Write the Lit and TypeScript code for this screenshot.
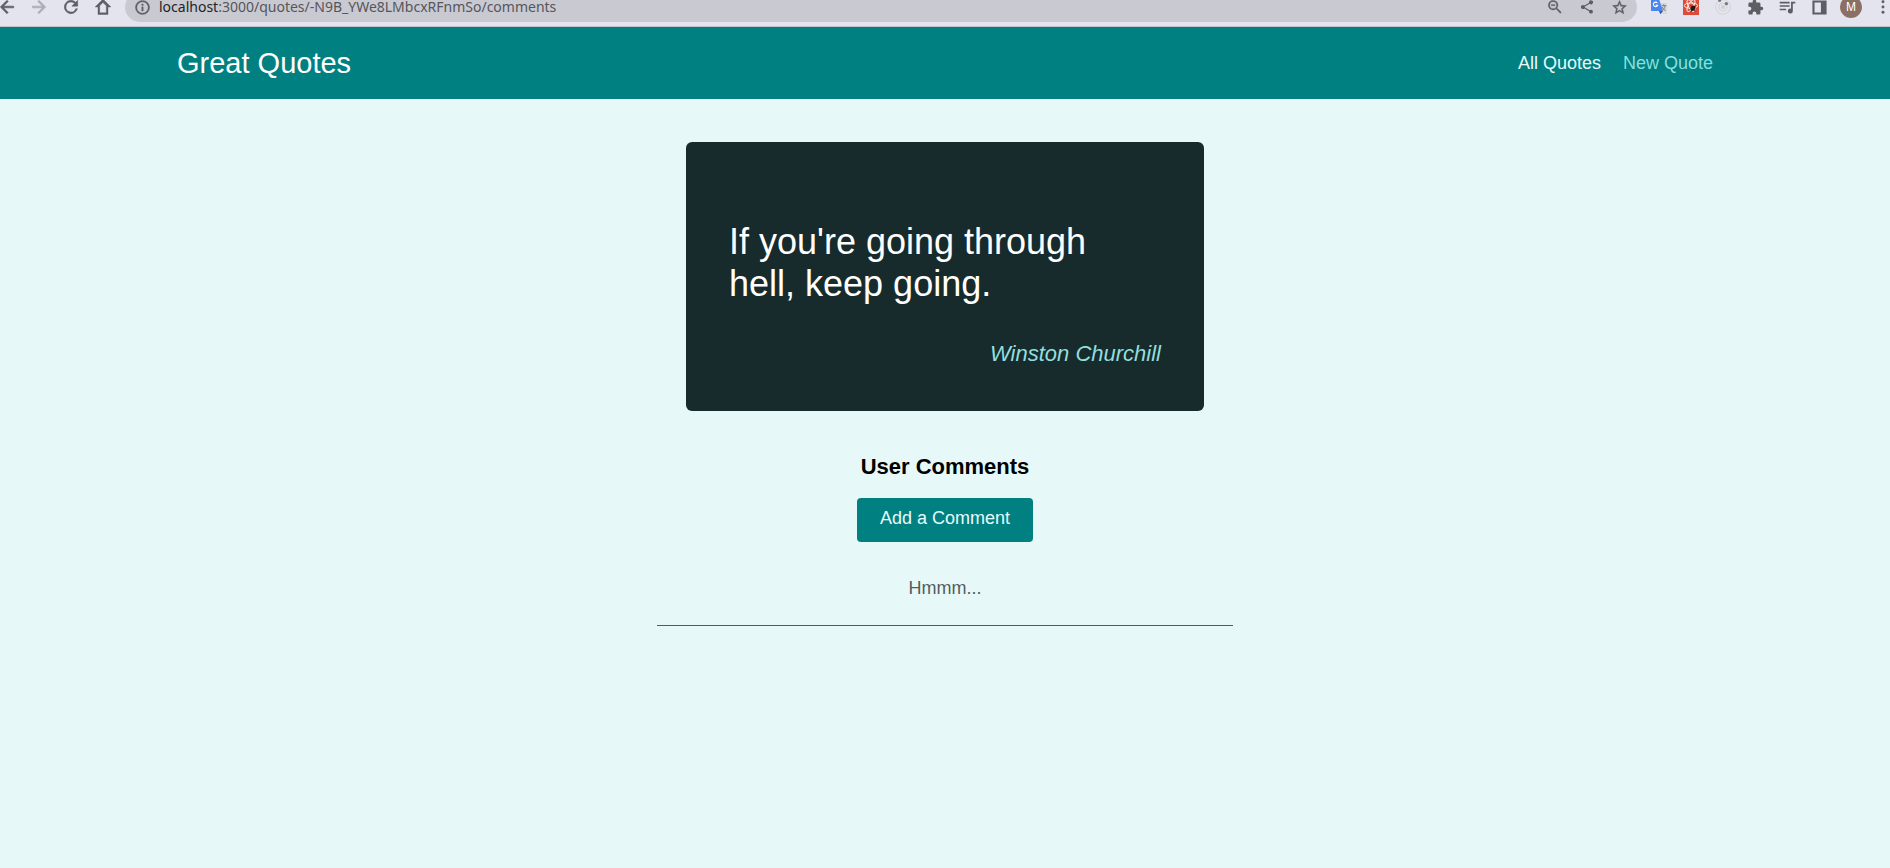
import { LitElement, html, css, svg } from "lit";
import { customElement } from "lit/decorators.js";

const icon = (body: unknown, size = 18) => html`<svg viewBox="0 0 24 24" width=${size} height=${size} fill="currentColor" aria-hidden="true">${body}</svg>`;

const ICONS = {
  back: svg`<path d="M20 11H7.8l5.6-5.6L12 4l-8 8 8 8 1.4-1.4L7.8 13H20z" stroke="currentColor" stroke-width=".8"/>`,
  forward: svg`<path d="M4 11h12.2l-5.6-5.6L12 4l8 8-8 8-1.4-1.4 5.6-5.6H4z" stroke="currentColor" stroke-width=".8"/>`,
  reload: svg`<path d="M17.65 6.35A8 8 0 1 0 19.73 14h-2.08A6 6 0 1 1 12 6c1.66 0 3.14.69 4.22 1.78L13 11h7V4z" stroke="currentColor" stroke-width=".6"/>`,
  home: svg`<path d="M12 2.500 2.500 12H6v9h12v-9h3.500z M8 19v-8.400l4-4 4 4V19z" fill-rule="evenodd" stroke="currentColor" stroke-width=".5"/>`,
  info: svg`<path d="M11 7h2v2h-2zm0 4h2v6h-2zm1-9a10 10 0 1 0 0 20 10 10 0 0 0 0-20zm0 18a8 8 0 1 1 0-16 8 8 0 0 1 0 16z" stroke="currentColor" stroke-width=".5"/>`,
  zoomOut: svg`<path d="M15.500 14h-.8l-.27-.27a6.500 6.500 0 1 0-.7.700l.27.28v.79l5 5L20.500 19zm-6 0a4.500 4.500 0 1 1 0-9 4.500 4.500 0 0 1 0 9zM7 8.800h5v1.400H7z" stroke="currentColor" stroke-width=".3"/>`,
  share: svg`<path d="M18 16.080c-.76 0-1.440.3-1.960.77L8.910 12.700c.05-.23.09-.46.09-.7s-.04-.47-.09-.7l7.050-4.110A3 3 0 1 0 15 5c0 .24.04.47.09.7L8.040 9.810a3 3 0 1 0 0 4.380l7.120 4.160c-.05.21-.08.43-.08.65a2.920 2.920 0 1 0 2.920-2.920z"/>`,
  star: svg`<path d="m22 9.240-7.190-.62L12 2 9.190 8.630 2 9.240l5.460 4.730L5.820 21 12 17.270 18.180 21l-1.630-7.030zM12 15.400l-3.760 2.270 1-4.280-3.320-2.880 4.380-.38L12 6.100l1.710 4.040 4.380.38-3.320 2.880 1 4.280z" stroke="currentColor" stroke-width=".5"/>`,
  puzzle: svg`<path d="M20.500 11H19V7a2 2 0 0 0-2-2h-4V3.500a2.500 2.500 0 0 0-5 0V5H4a2 2 0 0 0-2 2v3.800h1.500a2.700 2.700 0 0 1 0 5.400H2V20c0 1.100.9 2 2 2h3.800v-1.500a2.700 2.700 0 0 1 5.400 0V22H17a2 2 0 0 0 2-2v-4h1.500a2.500 2.500 0 0 0 0-5z"/>`,
  queue: svg`<path d="M1 4h14v2.200H1zm0 4.900h14v2.200H1zm0 4.900h9v2.200H1zM17 4h6v2.500h-3.500V17a3.500 3.500 0 1 1-2.500-3.300z"/>`,
  panel: svg`<path d="M2 2h20v20H2zM5 5v14h9V5z" fill-rule="evenodd"/>`,
  dots: svg`<circle cx="12" cy="4" r="2.200"/><circle cx="12" cy="12" r="2.200"/><circle cx="12" cy="20" r="2.200"/>`,
  translate: svg`<path d="M10 6h14v16H14z" fill="#d6d8da"/><path d="M0 0h12l6 18H0z" fill="#4a86f0"/><path d="M12 18h6l-4 5z" fill="#2b53c6"/><path d="M9.500 6A3.300 3.300 0 1 0 10 9.300H7" fill="none" stroke="#fff" stroke-width="1.700"/><path d="M16 10h7M19 8v2m2 0c-.5 4-2 6-4 7m0-5c1 3 3 5 5 5" fill="none" stroke="#6f8583" stroke-width="1.500"/>`,
  bug: svg`<path d="M0 0h24v24H0z" fill="#dd4b39"/><g fill="none" stroke="#fff" stroke-width="1.300"><ellipse cx="12" cy="10" rx="10" ry="4"/><ellipse cx="12" cy="10" rx="10" ry="4" transform="rotate(60 12 10)"/><ellipse cx="12" cy="10" rx="10" ry="4" transform="rotate(120 12 10)"/></g><ellipse cx="15" cy="14" rx="3" ry="4.500" transform="rotate(40 15 14)" fill="#2b1513"/><path d="m10 13 9 4M12 19l6-9M12 10l6 9" stroke="#2b1513" stroke-width="1.200"/>`,
  target: svg`<g fill="none" stroke="#d3d3d6" stroke-width="1.500"><circle cx="12" cy="12" r="11"/><circle cx="12" cy="12" r="6"/></g><circle cx="12" cy="12" r="3" fill="#d3cfcf"/><circle cx="17" cy="7" r="2.500" fill="#77777b"/><circle cx="7" cy="2" r="2.500" fill="#77777b"/>`,
};

@customElement("browser-bar")
export class BrowserBar extends LitElement {
  static styles = css`
    :host { display: flex; align-items: flex-end; height: 26px; overflow: hidden; background: #e4e4ee; border-bottom: 1px solid #c2c2cb; font-family: "Noto Sans", sans-serif; color: #5c5e63; }
    .row { flex: 1; min-width: 0; display: flex; align-items: center; height: 30px; margin: 0 -9px 4px; }
    button { flex: none; width: 32px; height: 30px; padding: 0; border: 0; background: none; color: inherit; display: grid; place-items: center; }
    .off { color: #acacb3; }
    .address { flex: 1; min-width: 0; display: flex; align-items: center; height: 30px; border-radius: 15px; background: #c9c9d1; margin: 0 6px; padding-right: 2px; }
    .info { width: 34px; }
    .field { flex: 1; min-width: 0; font-size: 14px; line-height: 14px; white-space: nowrap; color: #55565b; }
    .host { color: #222327; }
    .avatar { width: 22px; height: 22px; border-radius: 50%; background: #8d6e63; color: #fff; font-size: 12px; line-height: 22px; text-align: center; }
  `;
  render() {
    const b = (label: string, body: unknown, size = 18, cls = "") => html`<button class=${cls} aria-label=${label}>${icon(body, size)}</button>`;
    return html`<div class="row">
      ${b("Back", ICONS.back, 20)}${b("Forward", ICONS.forward, 20, "off")}${b("Reload", ICONS.reload, 20)}${b("Home", ICONS.home, 20)}
      <div class="address">
        ${b("Site information", ICONS.info, 17, "info")}
        <div class="field"><span class="host">localhost</span>:3000/quotes/-N9B_YWe8LMbcxRFnmSo/comments</div>
        ${b("Zoom", ICONS.zoomOut)}${b("Share", ICONS.share, 16)}${b("Bookmark", ICONS.star, 17)}
      </div>
      ${b("Translate", ICONS.translate, 16)}${b("React tools", ICONS.bug, 16)}${b("Recorder", ICONS.target, 16)}${b("Extensions", ICONS.puzzle, 17)}${b("Media", ICONS.queue, 17)}${b("Side panel", ICONS.panel, 17)}
      <button aria-label="Profile"><span class="avatar">M</span></button>
      ${b("Menu", ICONS.dots, 16)}
    </div>`;
  }
}

@customElement("app-root")
export class AppRoot extends LitElement {
  static styles = css`
    :host { display: block; min-height: 100vh; background: #e6f8f8; font-family: "Liberation Sans", Arial, sans-serif; color: #000; }
    .header { background: #008080; }
    .inner { display: flex; align-items: center; justify-content: space-between; height: 72px; max-width: 1536px; margin: 0 auto; }
    .brand { font-size: 29px; color: #fff; }
    .nav { display: flex; gap: 22px; font-size: 18px; }
    .nav a { color: #88dfdf; text-decoration: none; }
    .nav a.active { color: #e6fcfc; }
    main { max-width: 576px; margin: 0 auto; padding-top: 43px; }
    .quote { box-sizing: border-box; max-width: 518px; margin: 0 auto; padding: 79px 43px 44px; border-radius: 6px; background: #172b2c; }
    .text { margin: 0 0 36px; font-size: 36px; line-height: 42px; color: #fff; }
    .author { text-align: right; font-size: 22px; line-height: 26px; font-style: italic; color: #92dede; }
    .comments { display: flex; flex-direction: column; align-items: center; padding-top: 43px; }
    h2 { margin: 0 0 18px; font-size: 22px; line-height: 26px; }
    .add { font: inherit; font-size: 18px; line-height: 21px; padding: 10px 23px 13px; border: 0; border-radius: 4px; background: #008080; color: #e6fcfc; }
    .list { align-self: stretch; list-style: none; margin: 36px 0 0; padding: 0; }
    .list li { padding-bottom: 26px; border-bottom: 1px solid #008080; text-align: center; font-size: 18px; line-height: 21px; color: #555c5c; }
  `;
  render() {
    return html`<browser-bar></browser-bar>
      <header class="header"><div class="inner">
        <div class="brand">Great Quotes</div>
        <nav class="nav"><a class="active" href="#quotes">All Quotes</a><a href="#new-quote">New Quote</a></nav>
      </div></header>
      <main>
        <figure class="quote"><p class="text">If you're going through hell, keep going.</p><figcaption class="author">Winston Churchill</figcaption></figure>
        <section class="comments">
          <h2>User Comments</h2>
          <button class="add">Add a Comment</button>
          <ul class="list"><li>Hmmm...</li></ul>
        </section>
      </main>`;
  }
}
